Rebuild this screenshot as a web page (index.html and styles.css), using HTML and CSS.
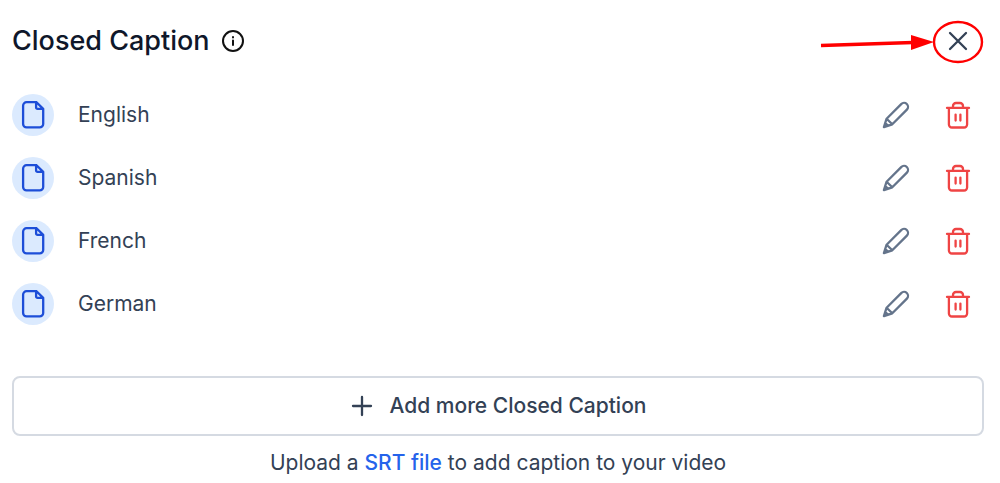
FILE: index.html
```html
<!DOCTYPE html>
<html lang="en">
<head>
    <meta charset="UTF-8">
    <meta name="viewport" content="width=device-width, initial-scale=1.0">
    <title>Closed Caption</title>
    <link rel="stylesheet" href="styles.css">
</head>
<body>

    <!-- Shared icons -->
    <svg class="icon-defs" aria-hidden="true">
        <symbol id="icon-file" viewBox="0 0 42 42">
            <path d="M24.5 8.2H14.6a3.5 3.5 0 0 0-3.5 3.5v18.2a3.5 3.5 0 0 0 3.5 3.5h13.1a3.5 3.5 0 0 0 3.500-3.5V14.9zM24.500 8.200l-.4.2v5.1a1.4 1.4 0 0 0 1.4 1.4h5.7"/>
        </symbol>
        <symbol id="icon-pencil" viewBox="0 0 28 28">
            <path d="M1.9 26.1l2.7-8.4L19.2 3.1a3.9 3.9 0 0 1 5.7 5.5L10.3 23.3zM4.6 17.7l5.7 5.6M3.3 22l2.6 2.6"/>
        </symbol>
        <symbol id="icon-trash" viewBox="0 0 28 28">
            <path d="M3 6.900h22M4.900 6.900v16.6a3 3 0 0 0 3 3h12.2a3 3 0 0 0 3-3V6.900M9 6.900V5a3 3 0 0 1 3-3h4a3 3 0 0 1 3 3v1.900M11.6 13.600v6M16.400 13.600v6"/>
        </symbol>
    </svg>

    <main class="panel">
        <header class="panel-header">
            <h1>Closed Caption</h1>
            <button type="button" class="info" aria-label="About closed captions">
                <svg viewBox="0 0 24 24">
                    <circle cx="12" cy="12" r="10"/>
                    <path d="M12 11.6v4.4M12 8v.5"/>
                </svg>
            </button>
            <div class="close-wrap">
                <button type="button" class="icon-btn close" aria-label="Close">
                    <svg viewBox="0 0 28 28"><path d="M6 6l16 16M22 6L6 22"/></svg>
                </button>
                <!-- Arrow and circle pointing at the close button -->
                <svg class="callout" viewBox="0 0 166 46" aria-hidden="true">
                    <path class="callout-line" d="M1 26.5l92-3"/>
                    <path class="callout-head" d="M91 16v15l23-8z"/>
                    <ellipse class="callout-line ring" cx="138" cy="23" rx="24" ry="20"/>
                </svg>
            </div>
        </header>

        <ul class="captions">
            <li class="caption">
                <span class="file"><svg><use href="#icon-file"/></svg></span>
                <span class="name">English</span>
                <button type="button" class="icon-btn edit" aria-label="Edit English"><svg><use href="#icon-pencil"/></svg></button>
                <button type="button" class="icon-btn delete" aria-label="Delete English"><svg><use href="#icon-trash"/></svg></button>
            </li>
            <li class="caption">
                <span class="file"><svg><use href="#icon-file"/></svg></span>
                <span class="name">Spanish</span>
                <button type="button" class="icon-btn edit" aria-label="Edit Spanish"><svg><use href="#icon-pencil"/></svg></button>
                <button type="button" class="icon-btn delete" aria-label="Delete Spanish"><svg><use href="#icon-trash"/></svg></button>
            </li>
            <li class="caption">
                <span class="file"><svg><use href="#icon-file"/></svg></span>
                <span class="name">French</span>
                <button type="button" class="icon-btn edit" aria-label="Edit French"><svg><use href="#icon-pencil"/></svg></button>
                <button type="button" class="icon-btn delete" aria-label="Delete French"><svg><use href="#icon-trash"/></svg></button>
            </li>
            <li class="caption">
                <span class="file"><svg><use href="#icon-file"/></svg></span>
                <span class="name">German</span>
                <button type="button" class="icon-btn edit" aria-label="Edit German"><svg><use href="#icon-pencil"/></svg></button>
                <button type="button" class="icon-btn delete" aria-label="Delete German"><svg><use href="#icon-trash"/></svg></button>
            </li>
        </ul>

        <button type="button" class="add">
            <svg viewBox="0 0 24 24"><path d="M12 3v18M3 12h18"/></svg>
            Add more Closed Caption
        </button>
        <p class="hint">Upload a <a href="#">SRT file</a> to add caption to your video</p>
    </main>

</body>
</html>
```
FILE: styles.css
```css
* {
    box-sizing: border-box;
}

body {
    margin: 0;
    background-color: #fff;
    color: #334155;
    font-family: Inter, "Liberation Sans", sans-serif;
    font-size: 21px;
    line-height: 28px;
}

svg {
    display: block;
    fill: none;
    stroke: currentColor;
    stroke-width: 2.3;
    stroke-linecap: round;
    stroke-linejoin: round;
}

button {
    padding: 0;
    border: none;
    background: none;
    color: inherit;
    font: inherit;
    cursor: pointer;
}

.icon-defs {
    display: none;
}

.panel {
    padding: 24px 16px 0 12px;
}

/* Header */
.panel-header {
    display: flex;
    align-items: center;
    height: 34px;
}

h1 {
    margin: 0;
    color: #0f172a;
    font-size: 27px;
    font-weight: 500;
    line-height: 36px;
}

.info {
    margin-left: 11px;
    color: #111;
}

.info svg {
    width: 24px;
    height: 24px;
    stroke-width: 2;
}

.close-wrap {
    position: relative;
    margin-left: auto;
    margin-right: 12px;
}

.icon-btn svg {
    width: 28px;
    height: 28px;
}

.icon-btn {
    display: block;
}

/* Lies over the header, centred on the close button */
.close-wrap .callout {
    position: absolute;
    right: -14px;
    top: -8px;
    width: 166px;
    height: 46px;
    pointer-events: none;
}

.callout-line {
    stroke: #f00;
    stroke-width: 3.5;
    stroke-linecap: butt;
}

.ring {
    stroke-width: 2.4;
}

.callout-head {
    fill: #f00;
    stroke: none;
}

/* Caption list */
.captions {
    display: grid;
    gap: 21px;
    margin: 36px 0 0;
    padding: 0;
    list-style: none;
}

.caption {
    display: flex;
    align-items: center;
    padding-right: 12px;
}

.file {
    border-radius: 50%;
    background-color: #dbeafe;
    color: #1d4ed8;
}

.file svg {
    width: 42px;
    height: 42px;
}

.name {
    flex: 1;
    margin-left: 24px;
}

.edit {
    color: #64748b;
}

.delete {
    margin-left: 34px;
    color: #ef4444;
}

/* Add button */
.add {
    display: flex;
    align-items: center;
    justify-content: center;
    gap: 16px;
    width: 100%;
    height: 60px;
    margin-top: 51px;
    border: 2px solid #d5dae2;
    border-radius: 8px;
    font-weight: 500;
}

.add svg {
    width: 24px;
    height: 24px;
}

.hint {
    margin: 13px 0 0;
    text-align: center;
}

.hint a {
    color: #2563eb;
    font-weight: 500;
    text-decoration: none;
}
```
